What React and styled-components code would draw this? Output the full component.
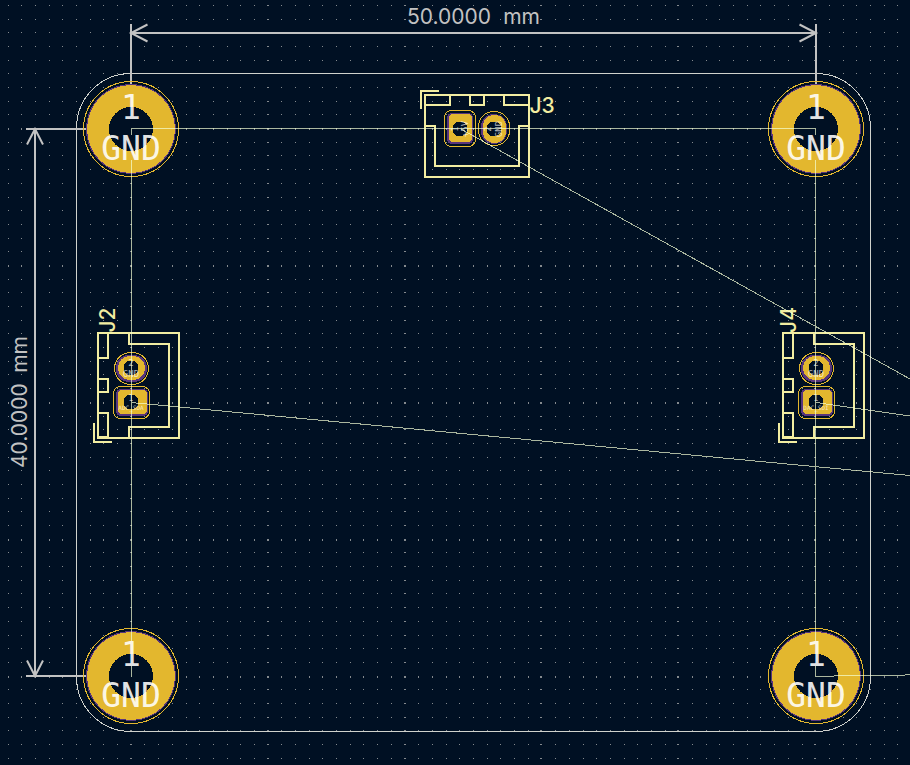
import React from "react";
import styled, { createGlobalStyle } from "styled-components";

const GlobalStyle = createGlobalStyle`
  html, body { margin: 0; background: #001023; }
`;

const Editor = styled.main`
  width: 100%;
  min-height: 100vh;
  overflow: hidden;
  background: #001023;
`;

const Board = styled.svg`
  display: block;
  width: 100%;
  height: auto;
`;

const Dots = styled.path`
  fill: #858a8e;
  shape-rendering: crispEdges;
`;

const Edge = styled.path`
  fill: none;
  stroke: #d0d2cd;
  stroke-width: 1;
  shape-rendering: crispEdges;
`;

const DimensionLine = styled.path`
  fill: none;
  stroke: #c2c2c2;
  stroke-width: 2;
  shape-rendering: ${(p) => (p.$arrow ? "auto" : "crispEdges")};
`;

const DimensionText = styled.text`
  fill: #c2c2c2;
  font: 400 21px Inter, sans-serif;
  text-anchor: ${(p) => p.$anchor || "start"};
`;

const Silk = styled.path`
  fill: none;
  stroke: #f2eda1;
  stroke-width: 2;
  shape-rendering: crispEdges;
`;

const Designator = styled.text`
  fill: #f2eda1;
  font: 500 21px Inter, sans-serif;
  text-anchor: middle;
`;

const Copper = styled.rect`
  fill: #e3b72e;
  shape-rendering: crispEdges;
`;

const Mask = styled.rect`
  fill: #59357c;
  shape-rendering: crispEdges;
`;

const Clearance = styled.rect`
  fill: none;
  stroke: #e3b72e;
  stroke-width: 1;
  shape-rendering: crispEdges;
`;

const Hole = styled.circle`
  fill: #001023;
  shape-rendering: crispEdges;
`;

const PadLabel = styled.text`
  fill: #ffffff;
  fill-opacity: ${(p) => (p.$small ? 0.7 : 0.9)};
  font: 400 ${(p) => p.$size}px "DejaVu Sans Mono", monospace;
  text-anchor: middle;
`;

const Airwire = styled.path`
  fill: none;
  stroke: #f3ffd4;
  stroke-opacity: 0.7;
  stroke-width: 1;
  shape-rendering: crispEdges;
`;

const MM = 13.688;

function gridPath() {
  let d = "";
  for (let i = -9; i <= 57; i++) {
    for (let j = -9; j <= 46; j++) {
      const wide = i % 10 === 0;
      const tall = j % 10 === 0;
      const w = wide ? 2 : 1;
      const h = tall ? 2 : 1;
      const x = Math.floor(131.3 + i * MM) - (wide ? 1 : 0);
      const y = Math.floor(128.6 + j * MM);
      d += `M${x} ${y}h${w}v${h}h-${w}z`;
    }
  }
  return d;
}

const GRID = gridPath();

function Box({ as: Part, x1, y1, x2, y2, r }) {
  return <Part x={x1} y={y1} width={x2 - x1} height={y2 - y1} rx={r} />;
}

function MountingPad({ x, y }) {
  return (
    <g>
      <Clearance x={x - 47.5} y={y - 47.5} width="95" height="95" rx="47.5" />
      <Mask x={x - 45} y={y - 45} width="90" height="90" rx="45" />
      <Copper x={x - 44} y={y - 44} width="88" height="88" rx="44" />
      <Hole cx={x} cy={y} r="22" />
    </g>
  );
}

function MountingLabel({ x, y }) {
  return (
    <g>
      <PadLabel $size={33} x={x} y={y - 10}>1</PadLabel>
      <PadLabel $size={33} x={x} y={y + 31}>GND</PadLabel>
    </g>
  );
}

function SideConnector({ x, name, labelX, net }) {
  return (
    <g transform={`translate(${x} 0)`}>
      <Silk d="M98 333H179V438H98ZM98 358H108V333M98 379H108V392H98M98 413H108V437H98M129 333V344H169V427H129V438M94 423V442H112" />
      <Designator transform={`translate(${labelX} 320) rotate(-90)`}>{name}</Designator>
      <Box as={Clearance} x1={114.5} y1={352.5} x2={148.5} y2={384.5} r={16} />
      <Box as={Mask} x1={116} y1={355} x2={147} y2={382} r={13} />
      <Box as={Copper} x1={118} y1={356} x2={145} y2={380} r={12} />
      <Hole cx="131" cy="368" r="7.5" />
      <Box as={Clearance} x1={113.5} y1={386.5} x2={149.5} y2={418.5} r={7} />
      <Box as={Mask} x1={116} y1={389} x2={148} y2={416} r={5} />
      <Box as={Copper} x1={118} y1={390} x2={147} y2={414} r={4} />
      <Hole cx="131" cy="402" r="7.5" />
      <PadLabel $small $size={9} x="131" y="366">2</PadLabel>
      <PadLabel $small $size={9} x="131" y="377">GND</PadLabel>
      <PadLabel $small $size={8} x="131" y="401">1</PadLabel>
      <PadLabel $small $size={6} x="131" y="410">{net}</PadLabel>
    </g>
  );
}

function TopConnector() {
  return (
    <g>
      <Silk d="M425 95H529V177H425ZM425 105H450V95M470 95V105H484V95M504 95V105H529M425 126H435V166H519V126H529M421 109V91H439" />
      <Designator x="542" y="113">J3</Designator>
      <Box as={Clearance} x1={444.5} y1={110.5} x2={475.5} y2={146.5} r={7} />
      <Box as={Mask} x1={447} y1={113} x2={473} y2={144} r={5} />
      <Box as={Copper} x1={449} y1={114} x2={472} y2={142} r={4} />
      <Hole cx="460" cy="129" r="7.5" />
      <Box as={Clearance} x1={478.5} y1={111.5} x2={509.5} y2={145.5} r={15} />
      <Box as={Mask} x1={481} y1={114} x2={507} y2={144} r={13} />
      <Box as={Copper} x1={483} y1={115} x2={506} y2={143} r={11} />
      <Hole cx="494" cy="129" r="7.5" />
      <PadLabel $small $size={8} transform="translate(458 129) rotate(-90)">1</PadLabel>
      <PadLabel $small $size={9} transform="translate(468 129) rotate(-90)">+5V</PadLabel>
      <PadLabel $small $size={8} transform="translate(491 129) rotate(-90)">2</PadLabel>
      <PadLabel $small $size={9} transform="translate(502 129) rotate(-90)">GND</PadLabel>
    </g>
  );
}

const MOUNTS = [
  { x: 131, y: 129 },
  { x: 816, y: 129 },
  { x: 131, y: 676 },
  { x: 816, y: 676 },
];

export default function App() {
  return (
    <Editor>
      <GlobalStyle />
      <Board viewBox="0 0 910 765" role="img" aria-label="Circuit board layout">
        <Dots d={GRID} />
        <Edge d="M131 73.5H816A54.5 54.5 0 0 1 870.5 128V677A54.5 54.5 0 0 1 816 731.5H131A54.5 54.5 0 0 1 76.5 677V128A54.5 54.5 0 0 1 131 73.5Z" />
        <DimensionLine d="M131 33H816M131 24V90M816 24V90M35 129V676M26 129H90M26 676H90" />
        <DimensionLine $arrow d="M147.500 24.500L131 33L147.500 41.500M799.500 24.500L816 33L799.500 41.500M27 144.500L35 129L43 144.500M27 660.500L35 676L43 660.500" />
        <DimensionText x="407" y="24">50.0000</DimensionText>
        <DimensionText $anchor="end" x="540" y="24">mm</DimensionText>
        <g transform="translate(27 468) rotate(-90)">
          <DimensionText>40.0000</DimensionText>
          <DimensionText $anchor="end" x="132">mm</DimensionText>
        </g>
        {MOUNTS.map((m) => (
          <MountingPad key={`${m.x}-${m.y}`} {...m} />
        ))}
        <TopConnector />
        <SideConnector x={0} name="J2" labelX={115} net="ADC_SDA" />
        <SideConnector x={685} name="J4" labelX={111} net="DAC_SDI" />
        <Airwire d="M131 128.500H816M131.500 129V135M131.500 160V641M131.500 666V677M815.500 129V135M815.500 160V641M815.500 666V676M815 676.500H834M834 675.500H905M905 674.500H910M460 128.500L910 379M131 402.500L910 475.500M816 402.500L910 416" />
        {MOUNTS.map((m) => (
          <MountingLabel key={`${m.x}-${m.y}`} {...m} />
        ))}
      </Board>
    </Editor>
  );
}
